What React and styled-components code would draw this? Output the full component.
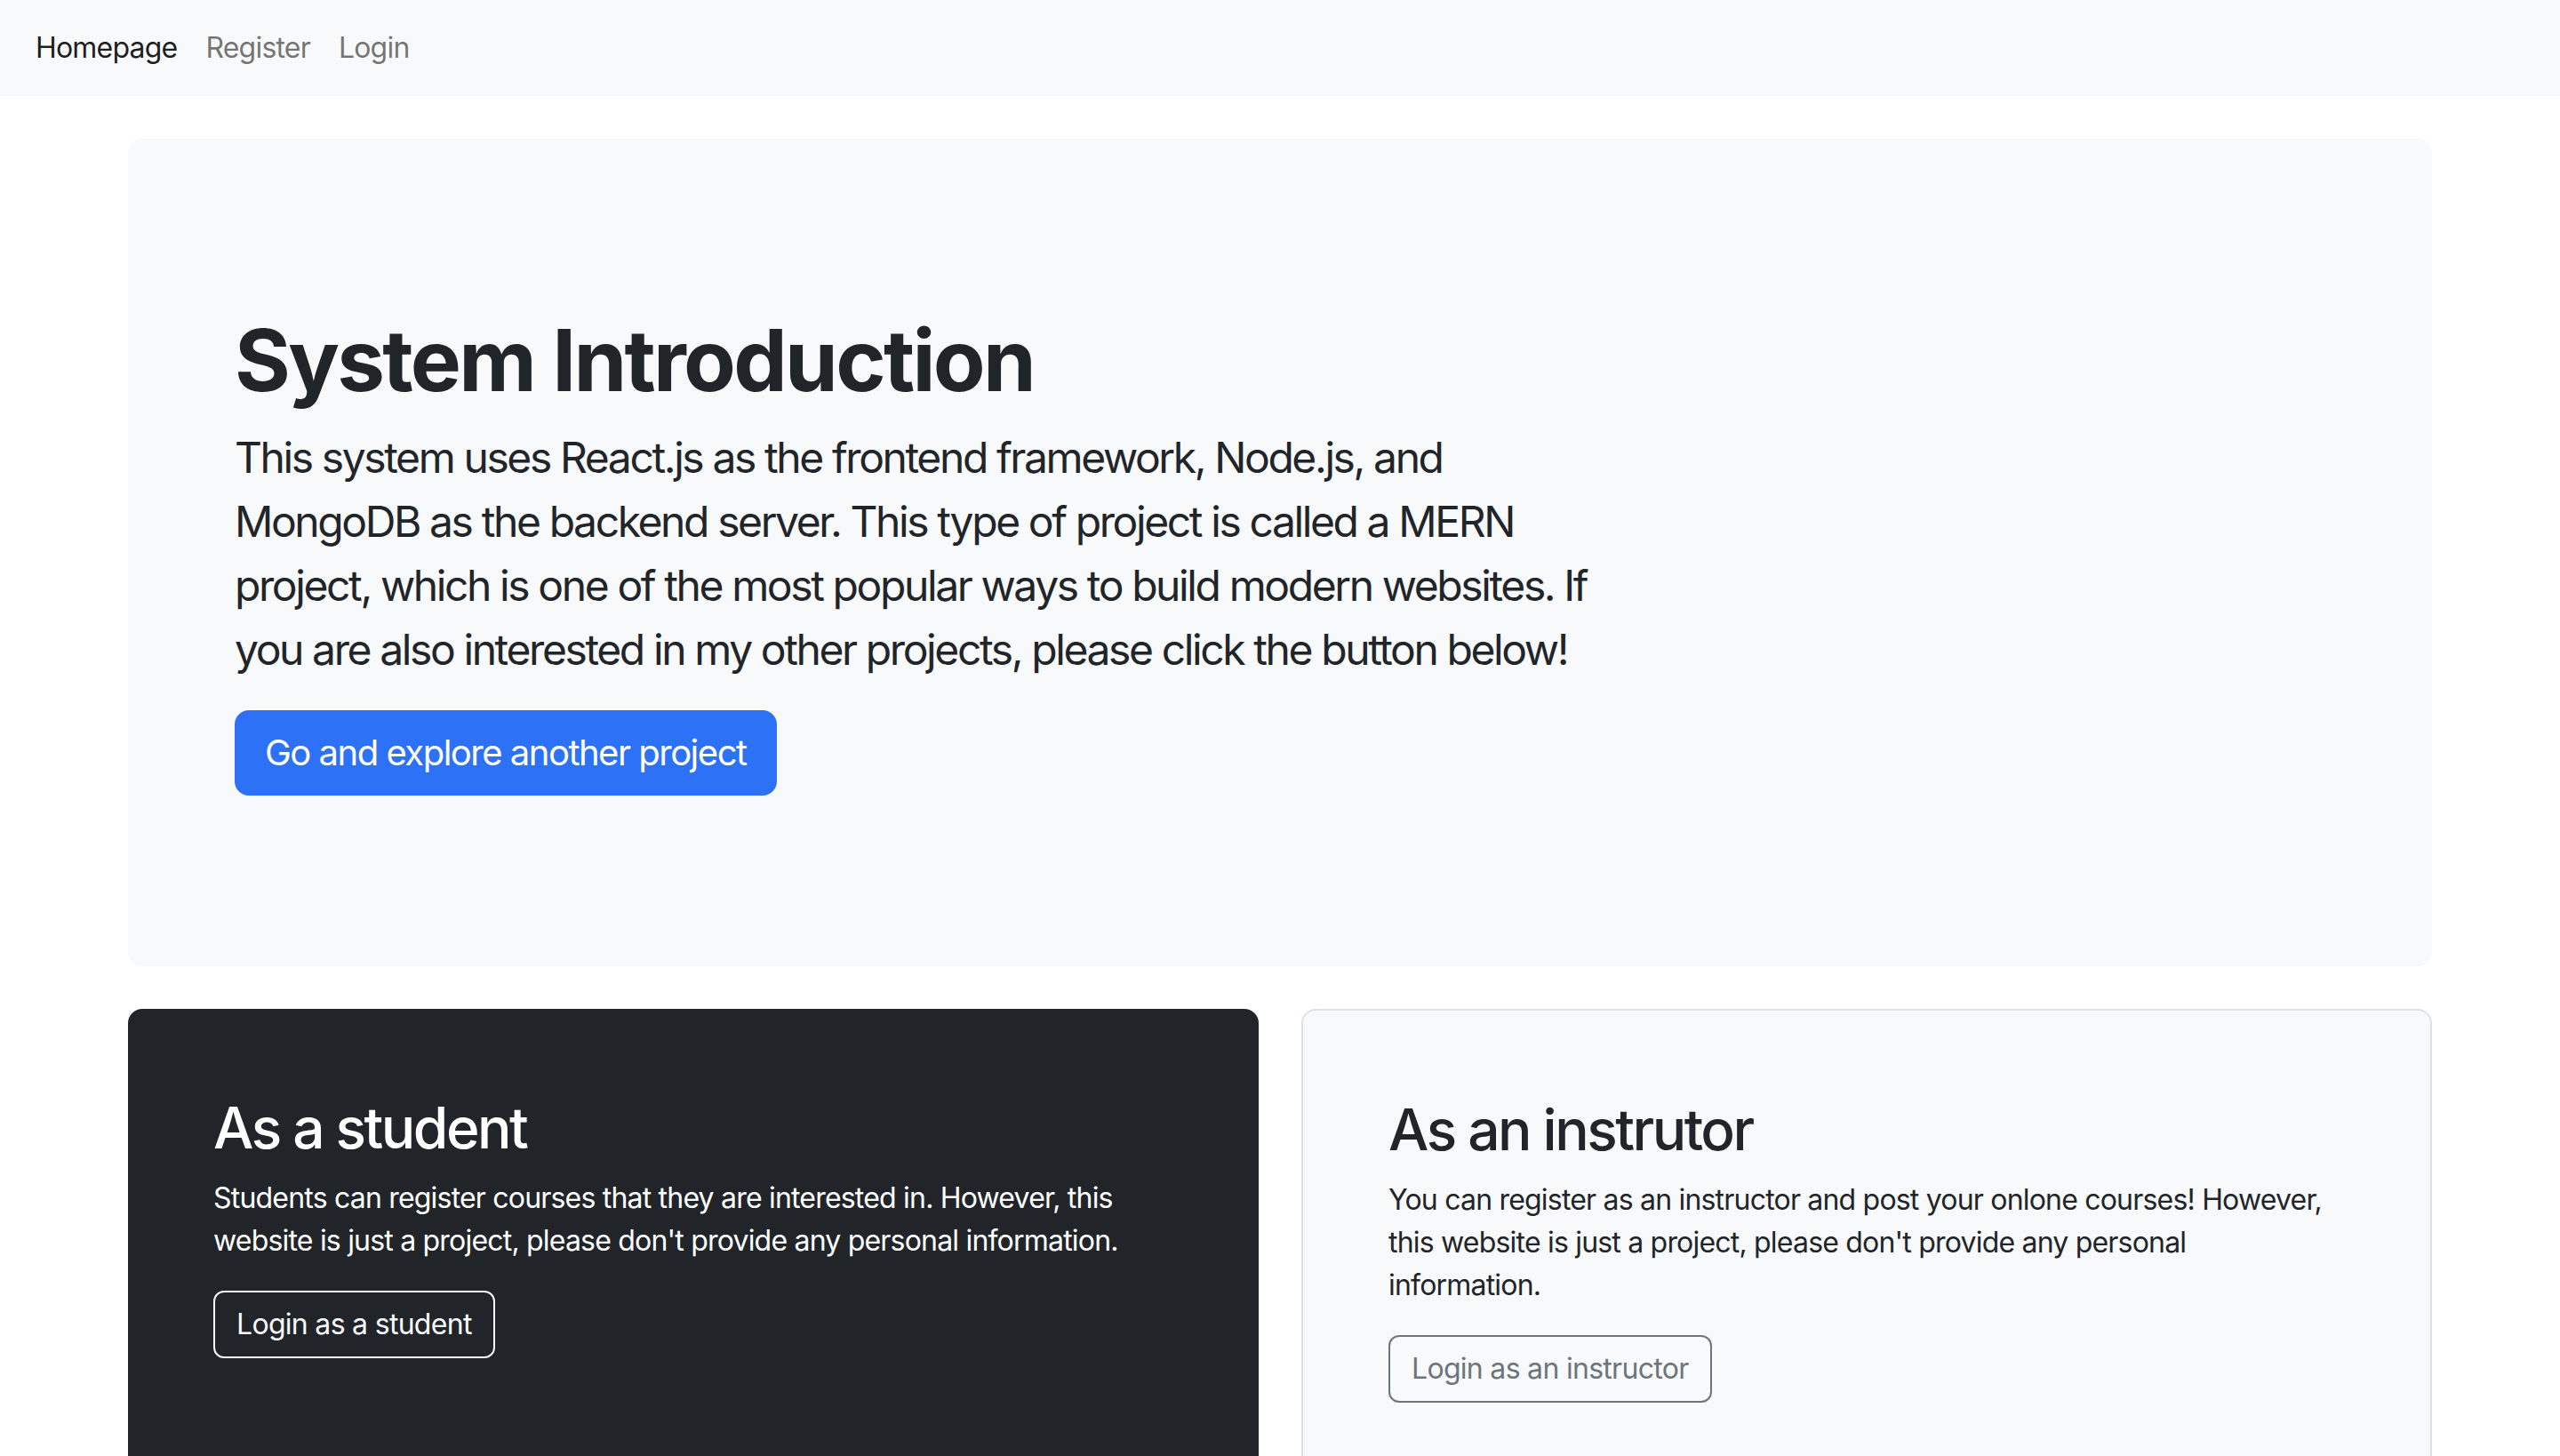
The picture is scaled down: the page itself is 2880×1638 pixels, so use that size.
import React from "react";
import styled, { createGlobalStyle } from "styled-components";

const Global = createGlobalStyle`
  * { box-sizing: border-box; }
  html, body { margin: 0; padding: 0; }
  body {
    background: #ffffff;
    color: #212529;
    font-family: Inter, "Noto Sans", "Liberation Sans", sans-serif;
    font-size: 32px;
    line-height: 1.5;
    -webkit-font-smoothing: antialiased;
  }
`;

const Navbar = styled.nav`
  background: #f8f9fa;
  height: 108px;
  display: flex;
  align-items: center;
  padding: 0 24px;
`;

const NavLink = styled.a`
  padding: 0 16px;
  font-size: 32px;
  line-height: 48px;
  letter-spacing: -0.8px;
  text-decoration: none;
  color: ${(p) => (p.$active ? "rgba(0,0,0,0.9)" : "rgba(0,0,0,0.55)")};
  cursor: pointer;
`;

const Container = styled.main`
  width: 2592px;
  margin: 0 auto;
  padding-top: 48px;
`;

const Jumbotron = styled.section`
  background: #f8f9fa;
  border-radius: 16px;
  padding: 192px 120px;
  margin-bottom: 48px;
`;

const Title = styled.h1`
  font-size: 96px;
  font-weight: 700;
  line-height: 1.2;
  margin: 0 0 16px;
  letter-spacing: -2.7px;
`;

const Lead = styled.p`
  width: 1568px;
  font-size: 48px;
  line-height: 72px;
  margin: 0 0 32px;
  letter-spacing: -2.4px;
`;

const PrimaryButton = styled.button`
  font-family: inherit;
  background: #2c71f6;
  color: #ffffff;
  border: 2px solid #2c71f6;
  border-radius: 16px;
  font-size: 40px;
  line-height: 60px;
  padding: 16px 32px;
  cursor: pointer;
  letter-spacing: -1.5px;
`;

const Row = styled.div`
  display: grid;
  grid-template-columns: 1fr 1fr;
  gap: 48px;
  align-items: stretch;
`;

const Card = styled.div`
  padding: 96px;
  border-radius: 16px;
  background: ${(p) => (p.$dark ? "#212529" : "#f8f9fa")};
  color: ${(p) => (p.$dark ? "#ffffff" : "#212529")};
  border: ${(p) => (p.$dark ? "none" : "2px solid #dee2e6")};
`;

const CardTitle = styled.h2`
  font-size: 64px;
  font-weight: 500;
  line-height: 1.2;
  margin: 0 0 16px;
  letter-spacing: -2.5px;
`;

const CardText = styled.p`
  font-size: 32px;
  line-height: 48px;
  margin: 0 0 32px;
  letter-spacing: -0.8px;
`;

const OutlineButton = styled.button`
  font-family: inherit;
  background: transparent;
  color: ${(p) => (p.$light ? "#f8f9fa" : "#6c757d")};
  border: 2px solid ${(p) => (p.$light ? "#f8f9fa" : "#6c757d")};
  border-radius: 12px;
  font-size: 32px;
  line-height: 48px;
  padding: 12px 24px;
  cursor: pointer;
  letter-spacing: -0.7px;
`;

export default function App() {
  return (
    <>
      <Global />
      <Navbar>
        <NavLink $active>Homepage</NavLink>
        <NavLink>Register</NavLink>
        <NavLink>Login</NavLink>
      </Navbar>
      <Container>
        <Jumbotron>
          <Title>System Introduction</Title>
          <Lead>
            This system uses React.js as the frontend framework, Node.js, and
            MongoDB as the backend server. This type of project is called a
            MERN project, which is one of the most popular ways to build modern
            websites. If you are also interested in my other projects, please
            click the button below!
          </Lead>
          <PrimaryButton>Go and explore another project</PrimaryButton>
        </Jumbotron>
        <Row>
          <Card $dark>
            <CardTitle>As a student</CardTitle>
            <CardText>
              Students can register courses that they are interested in.
              However, this website is just a project, please don't provide any
              personal information.
            </CardText>
            <OutlineButton $light>Login as a student</OutlineButton>
          </Card>
          <Card>
            <CardTitle>As an instrutor</CardTitle>
            <CardText>
              You can register as an instructor and post your onlone courses!
              However, this website is just a project, please don't provide any
              personal information.
            </CardText>
            <OutlineButton>Login as an instructor</OutlineButton>
          </Card>
        </Row>
      </Container>
    </>
  );
}
